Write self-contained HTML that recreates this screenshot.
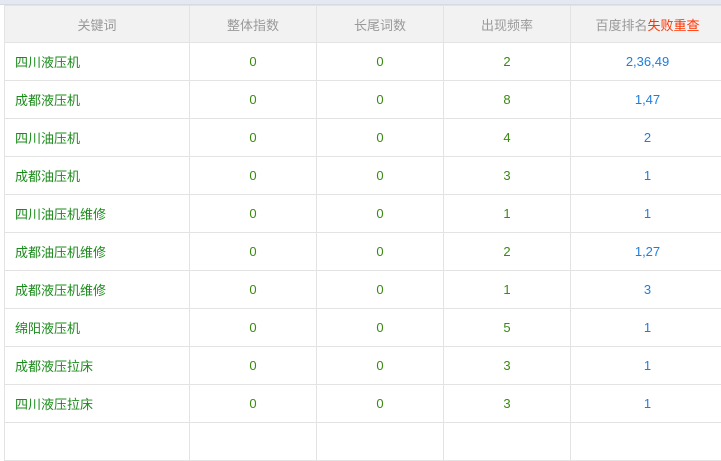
<!DOCTYPE html><html><head><meta charset="utf-8"><style>
body{margin:0;width:721px;height:431px;overflow:hidden;background:#fff;font-family:"Liberation Sans","Noto Sans CJK SC",sans-serif;font-size:13px}
.top{position:absolute;left:0;top:0;width:721px;height:4px;background:#e4e8f0;border-bottom:1px solid #d5dae3}
table{position:absolute;left:4px;top:5px;border-collapse:collapse;table-layout:fixed;width:720px}
td,th{border:1px solid #e3e3e3;height:37px;padding:0;text-align:center;font-weight:normal}
th{background:#f2f2f2;color:#999;height:36px}
td{color:#3a8a10}
td:first-child{text-align:left;padding-left:10px;color:#1a8a1a}
td.b{color:#1e7ee0}
.r{color:#ff3300}
</style></head><body><div class="top"></div>
<table><colgroup><col style="width:185px"><col style="width:127px"><col style="width:127px"><col style="width:127px"><col style="width:154px"></colgroup>
<tr><th>关键词</th><th>整体指数</th><th>长尾词数</th><th>出现频率</th><th>百度排名<span class="r">失败重查</span></th></tr>
<tr><td>四川液压机</td><td>0</td><td>0</td><td>2</td><td class="b">2,36,49</td></tr>
<tr><td>成都液压机</td><td>0</td><td>0</td><td>8</td><td class="b">1,47</td></tr>
<tr><td>四川油压机</td><td>0</td><td>0</td><td>4</td><td class="b">2</td></tr>
<tr><td>成都油压机</td><td>0</td><td>0</td><td>3</td><td class="b">1</td></tr>
<tr><td>四川油压机维修</td><td>0</td><td>0</td><td>1</td><td class="b">1</td></tr>
<tr><td>成都油压机维修</td><td>0</td><td>0</td><td>2</td><td class="b">1,27</td></tr>
<tr><td>成都液压机维修</td><td>0</td><td>0</td><td>1</td><td class="b">3</td></tr>
<tr><td>绵阳液压机</td><td>0</td><td>0</td><td>5</td><td class="b">1</td></tr>
<tr><td>成都液压拉床</td><td>0</td><td>0</td><td>3</td><td class="b">1</td></tr>
<tr><td>四川液压拉床</td><td>0</td><td>0</td><td>3</td><td class="b">1</td></tr>
<tr><td></td><td></td><td></td><td></td><td></td></tr>
</table></body></html>
